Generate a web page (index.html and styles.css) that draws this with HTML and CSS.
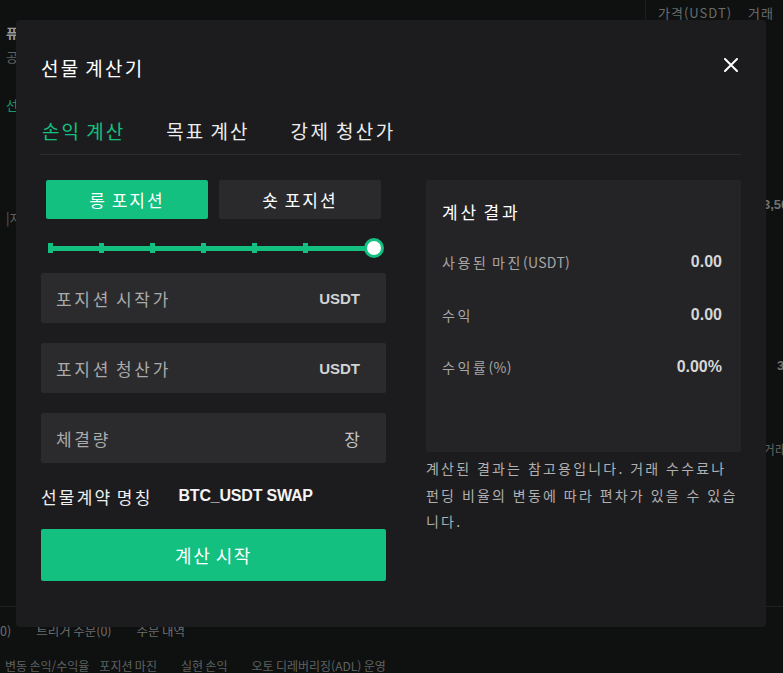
FILE: index.html
```html
<!DOCTYPE html>
<html lang="ko">
<head>
<meta charset="utf-8">
<title>선물 계산기</title>
<link rel="stylesheet" href="styles.css">
</head>
<body>
<div class="page">
  <div class="topbar">
    <span class="top-label">가격(USDT)</span>
    <span class="top-label">거래</span>
  </div>
  <div class="middle">
    <div class="side-left">
      <span class="bg-strong">퓨</span>
      <span class="bg-faint">공</span>
      <span class="bg-green">선</span>
      <span class="bg-faint gap-big">|지</span>
    </div>
    <div class="side-right">
      <span class="bg-num">3,50</span>
      <span class="bg-num gap-mid">3</span>
      <span class="bg-faint gap-sm">거래</span>
    </div>
  </div>
  <div class="bottom-tabs">
    <span>0)</span>
    <span>트리거 주문(0)</span>
    <span>주문 내역</span>
  </div>
  <div class="bottom-head">
    <span>변동 손익/수익율</span>
    <span>포지션 마진</span>
    <span>실현 손익</span>
    <span>오토 디레버리징(ADL) 운영</span>
  </div>
</div>

<div class="modal">
  <div class="modal-head">
    <h2 class="title">선물 계산기</h2>
    <button class="close" aria-label="닫기">
      <svg width="14" height="14" viewBox="0 0 14 14"><path d="M1 1L13 13M13 1L1 13" stroke="#ffffff" stroke-width="2" stroke-linecap="round"/></svg>
    </button>
  </div>
  <nav class="tabs">
    <span class="tab active">손익 계산</span>
    <span class="tab">목표 계산</span>
    <span class="tab">강제 청산가</span>
  </nav>
  <div class="modal-body">
    <div class="left">
      <div class="sides">
        <button class="side long">롱 포지션</button>
        <button class="side short">숏 포지션</button>
      </div>
      <div class="slider">
        <span class="tick"></span>
        <span class="tick"></span>
        <span class="tick"></span>
        <span class="tick"></span>
        <span class="tick"></span>
        <span class="tick"></span>
        <span class="knob"></span>
      </div>
      <div class="field"><span class="ph">포지션 시작가</span><span class="unit">USDT</span></div>
      <div class="field"><span class="ph">포지션 청산가</span><span class="unit">USDT</span></div>
      <div class="field"><span class="ph">체결량</span><span class="unit-ko">장</span></div>
      <div class="contract">
        <span class="contract-label">선물계약 명칭</span>
        <span class="contract-name">BTC_USDT SWAP</span>
      </div>
      <button class="calc">계산 시작</button>
    </div>
    <div class="right">
      <div class="result">
        <div class="result-title">계산 결과</div>
        <div class="row"><span class="label">사용된 마진<span class="lat">(USDT)</span></span><span class="val">0.00</span></div>
        <div class="row"><span class="label">수익</span><span class="val">0.00</span></div>
        <div class="row"><span class="label">수익률<span class="lat">(%)</span></span><span class="val">0.00%</span></div>
      </div>
      <p class="note">계산된 결과는 참고용입니다. 거래 수수료나 펀딩 비율의 변동에 따라 편차가 있을 수 있습니다.</p>
    </div>
  </div>
</div>
</body>
</html>
```
FILE: styles.css
```css
* { box-sizing: border-box; }
html, body { margin: 0; padding: 0; }
body {
  background: #0f1111;
  font-family: "Noto Sans CJK KR", "Noto Sans", sans-serif;
  width: 783px;
  height: 673px;
  overflow: hidden;
}

/* background page */
.page {
  height: 673px;
  display: flex;
  flex-direction: column;
}
.topbar {
  height: 24px;
  margin-left: 645px;
  border-left: 1px solid #1d1f1f;
  padding-left: 12px;
  display: flex;
  gap: 16px;
  align-items: center;
  white-space: nowrap;
}
.top-label {
  color: #6a6c6c;
  font-size: 13px;
  letter-spacing: 1px;
}
.middle {
  flex: 1;
  display: flex;
  justify-content: space-between;
  border-bottom: 1px solid #1f2121;
}
.side-left {
  display: flex;
  flex-direction: column;
  padding-left: 6px;
  font-size: 13px;
  line-height: 18px;
}
.bg-strong { color: #9a9a9a; font-weight: 700; }
.bg-faint { color: #5e6060; margin-top: 6px; white-space: nowrap; }
.bg-green { color: #169a66; margin-top: 30px; }
.gap-big { margin-top: 95px; }
.side-right {
  display: flex;
  flex-direction: column;
  width: 20px;
  font-size: 13px;
  line-height: 18px;
  white-space: nowrap;
}
.bg-num { color: #707272; font-weight: 700; font-family: "Liberation Sans", sans-serif; margin-top: 172px; }
.bg-num.gap-mid { margin-top: 143px; padding-left: 14px; }
.gap-sm { margin-top: 65px; }
.bottom-tabs {
  height: 44px;
  display: flex;
  align-items: center;
  gap: 25px;
  color: #6c6e6e;
  font-size: 12.5px;
  padding-top: 2px;
  white-space: nowrap;
  word-spacing: -1px;
}
.bottom-head {
  height: 22px;
  display: flex;
  gap: 10px;
  padding-left: 5px;
  color: #5f6161;
  font-size: 12px;
  line-height: 30px;
  overflow: hidden;
  white-space: nowrap;
  word-spacing: -1px;
}
.bottom-head span:nth-child(3) { margin-left: 14px; }
.bottom-head span:nth-child(4) { margin-left: 14px; }

/* modal */
.modal {
  position: fixed;
  left: 16px;
  top: 20px;
  width: 750px;
  height: 607px;
  background: #1c1c1f;
  border-radius: 4px;
  padding: 36px 25px 0 24px;
  color: #ffffff;
}
.modal-head {
  display: flex;
  justify-content: space-between;
  align-items: center;
  height: 24px;
}
.title {
  margin: 0 0 0 1px;
  font-size: 19px;
  font-weight: 400;
  letter-spacing: 2.3px;
  word-spacing: -3px;
  line-height: 24px;
  color: #ffffff;
}
.close {
  background: none;
  border: 0;
  padding: 0;
  margin: -6px 3px 0 0;
  width: 14px;
  height: 14px;
  display: flex;
  cursor: pointer;
}
.tabs {
  margin-top: 39px;
  display: flex;
  gap: 41px;
  padding: 0 0 11px 2px;
  border-bottom: 1px solid #2c2c30;
}
.tab {
  font-size: 19px;
  letter-spacing: 2px;
  word-spacing: -2px;
  line-height: 24px;
  color: #ececec;
}
.tab:last-child { letter-spacing: 2.4px; }
.tab.active { color: #13c07f; }

.modal-body {
  display: flex;
  gap: 40px;
  margin-top: 25px;
  padding-left: 1px;
}
.left {
  width: 345px;
  display: flex;
  flex-direction: column;
}
.sides {
  display: flex;
  gap: 11px;
  padding: 0 5px;
}
.side {
  flex: 1;
  height: 39px;
  border: 0;
  border-radius: 2px;
  font-family: inherit;
  font-size: 17px;
  letter-spacing: 2px;
  word-spacing: -2px;
  color: #ffffff;
  padding: 0;
}
.side.long { background: #13c07f; }
.side.short { background: #2a2a2d; }
.slider {
  margin: 19px 2px 0 7px;
  height: 20px;
  display: flex;
  align-items: center;
  gap: 46px;
  background: linear-gradient(#13c07f, #13c07f) left center / calc(100% - 10px) 5px no-repeat;
}
.tick {
  width: 5px;
  height: 10px;
  background: #13c07f;
  flex: none;
}
.knob {
  margin-left: auto;
  width: 20px;
  height: 20px;
  border-radius: 50%;
  background: #ffffff;
  border: 3px solid #13c07f;
  flex: none;
}
.field {
  height: 50px;
  margin-top: 15px;
  background: #2b2b2e;
  border-radius: 2px;
  display: flex;
  align-items: center;
  justify-content: space-between;
  padding: 0 26px 0 15px;
}
.field + .field { margin-top: 20px; }
.ph {
  font-size: 17px;
  letter-spacing: 2.7px;
  word-spacing: -2.5px;
  color: #aaaaaa;
}
.unit {
  font-family: "Liberation Sans", sans-serif;
  font-weight: 700;
  font-size: 15px;
  color: #d2d2d2;
}
.unit-ko {
  font-size: 17px;
  color: #c4c4c4;
}
.contract {
  margin-top: 21px;
  height: 24px;
  display: flex;
  align-items: center;
  gap: 26px;
}
.contract-label {
  font-size: 17px;
  letter-spacing: 2.2px;
  word-spacing: -2.5px;
  color: #f0f0f0;
}
.contract-name {
  font-family: "Liberation Sans", sans-serif;
  font-weight: 700;
  font-size: 16px;
  color: #f4f4f4;
  letter-spacing: -0.2px;
}
.calc {
  margin-top: 21px;
  height: 52px;
  border: 0;
  border-radius: 2px;
  background: #13c07f;
  color: #ffffff;
  font-family: inherit;
  font-size: 18px;
  letter-spacing: 1.5px;
  word-spacing: -2px;
  padding: 0;
}

.right {
  width: 315px;
  display: flex;
  flex-direction: column;
}
.result {
  height: 272px;
  background: #242427;
  border-radius: 2px;
  padding: 20px 19px 0 16px;
}
.result-title {
  font-size: 17px;
  letter-spacing: 2.8px;
  word-spacing: -3px;
  line-height: 24px;
  color: #ffffff;
  margin-bottom: 12px;
}
.row {
  height: 52.5px;
  display: flex;
  align-items: center;
  justify-content: space-between;
}
.label {
  font-size: 14px;
  letter-spacing: 2.6px;
  word-spacing: -3px;
  color: #a6a6a6;
}
.lat {
  letter-spacing: 0.3px;
}
.val {
  font-family: "Liberation Sans", sans-serif;
  font-weight: 700;
  font-size: 16px;
  color: #d6d6d6;
}
.note {
  margin: 3px 0 0;
  font-size: 14px;
  letter-spacing: 2.2px;
  word-spacing: -0.4px;
  line-height: 26.5px;
  color: #b0b0b0;
}
```
